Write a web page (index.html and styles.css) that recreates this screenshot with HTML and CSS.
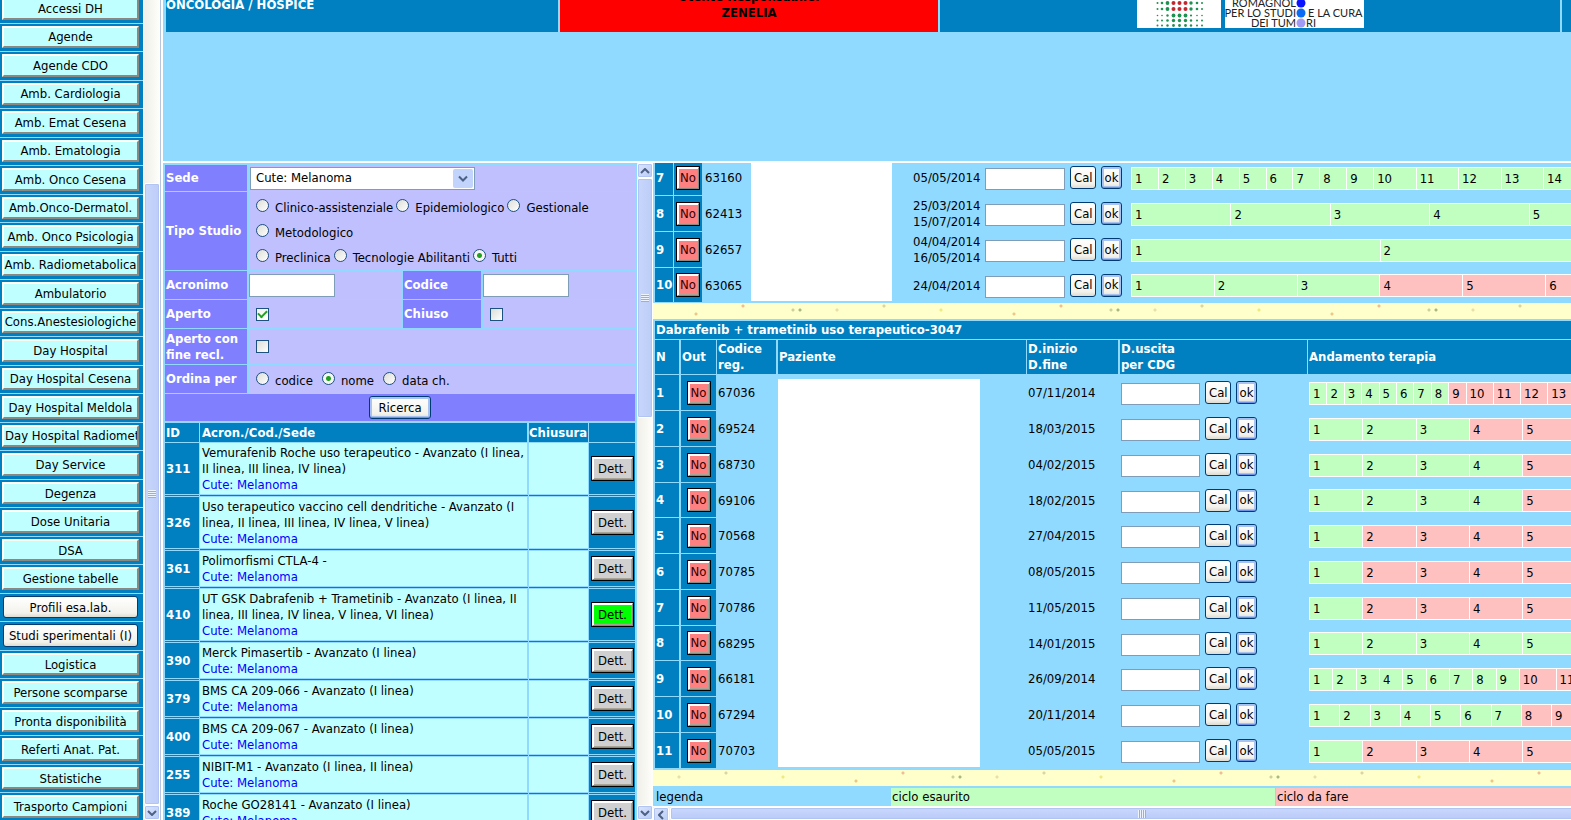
FILE: index.html
```html
<!DOCTYPE html>
<html lang="it">
<head>
<meta charset="utf-8">
<title>Oncologia / Hospice - Studi sperimentali</title>
<link rel="stylesheet" href="styles.css">
</head>
<body>
<svg class="defs" aria-hidden="true">
  <symbol id="up" viewBox="0 0 10 6"><path d="M1 5l4-4 4 4" fill="none" stroke="#4d6185" stroke-width="2"/></symbol>
  <symbol id="down" viewBox="0 0 10 6"><path d="M1 1l4 4 4-4" fill="none" stroke="#4d6185" stroke-width="2"/></symbol>
  <symbol id="left" viewBox="0 0 6 10"><path d="M5 1L1 5l4 4" fill="none" stroke="#4d6185" stroke-width="2"/></symbol>
</svg>

<nav class="sidebar">
  <div class="menu">
    <div class="item"><button>Accessi DH</button></div>
    <div class="item"><button>Agende</button></div>
    <div class="item"><button>Agende CDO</button></div>
    <div class="item"><button>Amb. Cardiologia</button></div>
    <div class="item"><button>Amb. Emat Cesena</button></div>
    <div class="item"><button>Amb. Ematologia</button></div>
    <div class="item"><button>Amb. Onco Cesena</button></div>
    <div class="item"><button>Amb.Onco-Dermatol.</button></div>
    <div class="item"><button>Amb. Onco Psicologia</button></div>
    <div class="item"><button>Amb. Radiometabolica</button></div>
    <div class="item"><button>Ambulatorio</button></div>
    <div class="item"><button>Cons.Anestesiologiche</button></div>
    <div class="item"><button>Day Hospital</button></div>
    <div class="item"><button>Day Hospital Cesena</button></div>
    <div class="item"><button>Day Hospital Meldola</button></div>
    <div class="item"><button class="long">Day Hospital Radiometab.</button></div>
    <div class="item"><button>Day Service</button></div>
    <div class="item"><button>Degenza</button></div>
    <div class="item"><button>Dose Unitaria</button></div>
    <div class="item"><button>DSA</button></div>
    <div class="item"><button>Gestione tabelle</button></div>
    <div class="item"><button class="xp">Profili esa.lab.</button></div>
    <div class="item"><button class="xp">Studi sperimentali (I)</button></div>
    <div class="item"><button>Logistica</button></div>
    <div class="item"><button>Persone scomparse</button></div>
    <div class="item"><button>Pronta disponibilità</button></div>
    <div class="item"><button>Referti Anat. Pat.</button></div>
    <div class="item"><button>Statistiche</button></div>
    <div class="item"><button>Trasporto Campioni</button></div>
  </div>
  <div class="scroll scroll-menu">
    <div class="thumb"><i class="grip"></i></div>
    <div class="arrow"><svg width="10" height="6"><use href="#down"/></svg></div>
  </div>
</nav>

<div class="main">
  <header class="top">
    <div class="banner">
      <div class="cell unit">ONCOLOGIA / HOSPICE</div>
      <div class="cell user">Utente Responsabile:<br>ZENELIA</div>
      <div class="cell logos">
        <svg class="logo-dots" width="84" height="28" viewBox="0 0 84 28">
          <rect width="84" height="28" fill="#fff"/>
          <g fill="#1f9150">
            <circle cx="20.500" cy="3" r="1"/><circle cx="25" cy="3" r="1.300"/><circle cx="30.500" cy="3" r="1.900"/><circle cx="54" cy="3" r="1.700"/><circle cx="60" cy="3" r="1.300"/><circle cx="65" cy="3" r="1"/>
            <circle cx="20.500" cy="9" r="1"/><circle cx="25" cy="9" r="1.300"/><circle cx="30.500" cy="9" r="1.900"/><circle cx="54" cy="9" r="1.700"/><circle cx="60" cy="9" r="1.300"/><circle cx="65" cy="9" r="1"/>
            <circle cx="20.500" cy="15.500" r=".8"/><circle cx="25" cy="15.500" r=".8"/><circle cx="30.500" cy="15.500" r="1.200"/><circle cx="36.500" cy="15.500" r="1.900"/><circle cx="42.500" cy="15.500" r="1.900"/><circle cx="48.500" cy="15.500" r="1.900"/><circle cx="54" cy="15.500" r="1.100"/><circle cx="60" cy="15.500" r=".8"/><circle cx="65" cy="15.500" r=".8"/>
            <circle cx="20.500" cy="20.500" r="1"/><circle cx="25" cy="20.500" r="1"/><circle cx="30.500" cy="20.500" r="1.300"/><circle cx="36.500" cy="20.500" r="1.700"/><circle cx="42.500" cy="20.500" r="1.700"/><circle cx="48.500" cy="20.500" r="1.700"/><circle cx="54" cy="20.500" r="1.200"/><circle cx="60" cy="20.500" r="1"/><circle cx="65" cy="20.500" r="1"/>
            <circle cx="20.500" cy="25.500" r="1"/><circle cx="25" cy="25.500" r="1"/><circle cx="30.500" cy="25.500" r="1.200"/><circle cx="36.500" cy="25.500" r="1.400"/><circle cx="42.500" cy="25.500" r="1.400"/><circle cx="48.500" cy="25.500" r="1.400"/><circle cx="54" cy="25.500" r="1.200"/><circle cx="60" cy="25.500" r="1"/><circle cx="65" cy="25.500" r="1"/>
          </g>
          <g fill="#c1272d">
            <circle cx="36.500" cy="3" r="2"/><circle cx="42.500" cy="3" r="2"/><circle cx="48.500" cy="3" r="2"/>
            <circle cx="36.500" cy="9" r="2"/><circle cx="42.500" cy="9" r="2"/><circle cx="48.500" cy="9" r="2"/>
          </g>
        </svg>
        <svg class="logo-text" width="139" height="28" viewBox="0 0 139 28">
          <rect width="139" height="28" fill="#fff"/>
          <text x="71" y="7" text-anchor="end">ROMAGNOL</text>
          <text x="71" y="17" text-anchor="end">PER LO STUDI</text>
          <text x="83" y="17">E LA CURA</text>
          <text x="71" y="27" text-anchor="end">DEI TUM</text>
          <text x="81" y="27">RI</text>
          <circle cx="76" cy="3" r="4.500" fill="#0a14ff"/>
          <circle cx="76" cy="13" r="4.500" fill="#0a6cf5"/>
          <circle cx="76" cy="23" r="4.500" fill="#a09cf5"/>
        </svg>
      </div>
      <div class="cell rest"></div>
    </div>
  </header>

  <div class="frames">
    <section class="studies">
      <div class="pane">
        <form class="search">
          <label class="lab" for="sede">Sede</label>
          <div class="val wide"><span class="select"><select id="sede"><option>Cute: Melanoma</option></select><svg width="10" height="6"><use href="#down"/></svg></span></div>
          <div class="lab">Tipo Studio</div>
          <div class="val wide types">
            <div class="radios"><label><input type="radio" name="tipo">Clinico-assistenziale</label><label><input type="radio" name="tipo">Epidemiologico</label><label><input type="radio" name="tipo">Gestionale</label></div>
            <div class="radios"><label><input type="radio" name="tipo">Metodologico</label></div>
            <div class="radios"><label><input type="radio" name="tipo">Preclinica</label><label><input type="radio" name="tipo">Tecnologie Abilitanti</label><label><input type="radio" name="tipo" checked>Tutti</label></div>
          </div>
          <label class="lab" for="acr">Acronimo</label>
          <div class="val"><input class="text" id="acr" type="text"></div>
          <label class="lab" for="cod">Codice</label>
          <div class="val"><input class="text" id="cod" type="text"></div>
          <label class="lab" for="ap">Aperto</label>
          <div class="val"><input type="checkbox" id="ap" checked></div>
          <label class="lab" for="ch">Chiuso</label>
          <div class="val"><input type="checkbox" id="ch"></div>
          <label class="lab" for="fr">Aperto con fine recl.</label>
          <div class="val wide"><input type="checkbox" id="fr"></div>
          <div class="lab">Ordina per</div>
          <div class="val wide"><div class="radios order"><label><input type="radio" name="ord">codice</label><label><input type="radio" name="ord" checked>nome</label><label><input type="radio" name="ord">data ch.</label></div></div>
          <div class="submit"><button class="xp focus" type="button">Ricerca</button></div>
        </form>
        <table class="results">
          <colgroup><col class="r-id"><col><col class="r-ch"><col class="r-bt"></colgroup>
          <thead><tr><th>ID</th><th class="pad">Acron./Cod./Sede</th><th>Chiusura</th><th></th></tr></thead>
          <tbody>
            <tr class="tall"><th>311</th><td class="pad">Vemurafenib Roche uso terapeutico - Avanzato (I linea, II linea, III linea, IV linea)<br><span class="site">Cute: Melanoma</span></td><td></td><td class="act"><button class="old">Dett.</button></td></tr>
            <tr class="tall"><th>326</th><td class="pad">Uso terapeutico vaccino cell dendritiche - Avanzato (I linea, II linea, III linea, IV linea, V linea)<br><span class="site">Cute: Melanoma</span></td><td></td><td class="act"><button class="old">Dett.</button></td></tr>
            <tr><th>361</th><td class="pad">Polimorfismi CTLA-4 -<br><span class="site">Cute: Melanoma</span></td><td></td><td class="act"><button class="old">Dett.</button></td></tr>
            <tr class="tall"><th>410</th><td class="pad">UT GSK Dabrafenib + Trametinib - Avanzato (I linea, II linea, III linea, IV linea, V linea, VI linea)<br><span class="site">Cute: Melanoma</span></td><td></td><td class="act"><button class="old on">Dett.</button></td></tr>
            <tr><th>390</th><td class="pad">Merck Pimasertib - Avanzato (I linea)<br><span class="site">Cute: Melanoma</span></td><td></td><td class="act"><button class="old">Dett.</button></td></tr>
            <tr><th>379</th><td class="pad">BMS CA 209-066 - Avanzato (I linea)<br><span class="site">Cute: Melanoma</span></td><td></td><td class="act"><button class="old">Dett.</button></td></tr>
            <tr><th>400</th><td class="pad">BMS CA 209-067 - Avanzato (I linea)<br><span class="site">Cute: Melanoma</span></td><td></td><td class="act"><button class="old">Dett.</button></td></tr>
            <tr><th>255</th><td class="pad">NIBIT-M1 - Avanzato (I linea, II linea)<br><span class="site">Cute: Melanoma</span></td><td></td><td class="act"><button class="old">Dett.</button></td></tr>
            <tr><th>389</th><td class="pad">Roche GO28141 - Avanzato (I linea)<br><span class="site">Cute: Melanoma</span></td><td></td><td class="act"><button class="old">Dett.</button></td></tr>
          </tbody>
        </table>
      </div>
      <div class="scroll scroll-studies">
        <div class="arrow"><svg width="10" height="6"><use href="#up"/></svg></div>
        <div class="thumb"><i class="grip"></i></div>
        <div class="space"></div>
        <div class="arrow"><svg width="10" height="6"><use href="#down"/></svg></div>
      </div>
    </section>

    <section class="patients">
      <div class="view">
        <table class="pts first">
          <colgroup><col class="a-n"><col class="a-out"><col class="a-cod"><col class="a-paz"><col class="a-date"><col class="a-exit"><col></colgroup>
          <tbody>
            <tr><th>7</th><th class="out"><button class="old no">No</button></th><td>63160</td><td class="blank" rowspan="4"></td><td>05/05/2014</td><td><div class="exit"><input class="text" type="text" aria-label="Data uscita"><button class="xp">Cal</button><button class="xp focus">ok</button></div></td><td><ol class="cycles"><li>1<li>2<li>3<li>4<li>5<li>6<li>7<li>8<li>9<li class="w">10<li class="w">11<li class="w">12<li class="w">13<li class="w">14<li class="w">15</ol></td></tr>
            <tr><th>8</th><th class="out"><button class="old no">No</button></th><td>62413</td><td>25/03/2014<br>15/07/2014</td><td><div class="exit"><input class="text" type="text" aria-label="Data uscita"><button class="xp">Cal</button><button class="xp focus">ok</button></div></td><td><ol class="cycles"><li>1<li>2<li>3<li>4<li>5</ol></td></tr>
            <tr><th>9</th><th class="out"><button class="old no">No</button></th><td>62657</td><td>04/04/2014<br>16/05/2014</td><td><div class="exit"><input class="text" type="text" aria-label="Data uscita"><button class="xp">Cal</button><button class="xp focus">ok</button></div></td><td><ol class="cycles"><li>1<li>2</ol></td></tr>
            <tr><th>10</th><th class="out"><button class="old no">No</button></th><td>63065</td><td>24/04/2014</td><td><div class="exit"><input class="text" type="text" aria-label="Data uscita"><button class="xp">Cal</button><button class="xp focus">ok</button></div></td><td><ol class="cycles"><li>1<li>2<li>3<li class="t">4<li class="t">5<li class="t">6</ol></td></tr>
          </tbody>
        </table>
        <div class="sand"></div>
        <h2>Dabrafenib + trametinib uso terapeutico-3047</h2>
        <table class="pts second">
          <colgroup><col class="b-n"><col class="b-out"><col class="b-cod"><col class="b-paz"><col class="b-date"><col class="b-exit"><col></colgroup>
          <thead><tr><th>N</th><th>Out</th><th>Codice reg.</th><th>Paziente</th><th>D.inizio<br>D.fine</th><th>D.uscita<br>per CDG</th><th>Andamento terapia</th></tr></thead>
          <tbody>
            <tr><th>1</th><th class="out"><button class="old no">No</button></th><td>67036</td><td class="blank" rowspan="11"></td><td>07/11/2014</td><td><div class="exit"><input class="text" type="text" aria-label="Data uscita"><button class="xp">Cal</button><button class="xp focus">ok</button></div></td><td><ol class="cycles"><li>1<li>2<li>3<li>4<li>5<li>6<li>7<li>8<li class="t">9<li class="t w">10<li class="t w">11<li class="t w">12<li class="t w">13<li class="t w">14<li class="t w">15</ol></td></tr>
            <tr><th>2</th><th class="out"><button class="old no">No</button></th><td>69524</td><td>18/03/2015</td><td><div class="exit"><input class="text" type="text" aria-label="Data uscita"><button class="xp">Cal</button><button class="xp focus">ok</button></div></td><td><ol class="cycles"><li>1<li>2<li>3<li class="t">4<li class="t">5<li class="t">6</ol></td></tr>
            <tr><th>3</th><th class="out"><button class="old no">No</button></th><td>68730</td><td>04/02/2015</td><td><div class="exit"><input class="text" type="text" aria-label="Data uscita"><button class="xp">Cal</button><button class="xp focus">ok</button></div></td><td><ol class="cycles"><li>1<li>2<li>3<li>4<li class="t">5<li class="t">6</ol></td></tr>
            <tr><th>4</th><th class="out"><button class="old no">No</button></th><td>69106</td><td>18/02/2015</td><td><div class="exit"><input class="text" type="text" aria-label="Data uscita"><button class="xp">Cal</button><button class="xp focus">ok</button></div></td><td><ol class="cycles"><li>1<li>2<li>3<li>4<li class="t">5<li class="t">6</ol></td></tr>
            <tr><th>5</th><th class="out"><button class="old no">No</button></th><td>70568</td><td>27/04/2015</td><td><div class="exit"><input class="text" type="text" aria-label="Data uscita"><button class="xp">Cal</button><button class="xp focus">ok</button></div></td><td><ol class="cycles"><li>1<li class="t">2<li class="t">3<li class="t">4<li class="t">5<li class="t">6</ol></td></tr>
            <tr><th>6</th><th class="out"><button class="old no">No</button></th><td>70785</td><td>08/05/2015</td><td><div class="exit"><input class="text" type="text" aria-label="Data uscita"><button class="xp">Cal</button><button class="xp focus">ok</button></div></td><td><ol class="cycles"><li>1<li class="t">2<li class="t">3<li class="t">4<li class="t">5<li class="t">6</ol></td></tr>
            <tr><th>7</th><th class="out"><button class="old no">No</button></th><td>70786</td><td>11/05/2015</td><td><div class="exit"><input class="text" type="text" aria-label="Data uscita"><button class="xp">Cal</button><button class="xp focus">ok</button></div></td><td><ol class="cycles"><li>1<li class="t">2<li class="t">3<li class="t">4<li class="t">5<li class="t">6</ol></td></tr>
            <tr><th>8</th><th class="out"><button class="old no">No</button></th><td>68295</td><td>14/01/2015</td><td><div class="exit"><input class="text" type="text" aria-label="Data uscita"><button class="xp">Cal</button><button class="xp focus">ok</button></div></td><td><ol class="cycles"><li>1<li>2<li>3<li>4<li>5<li class="t">6</ol></td></tr>
            <tr><th>9</th><th class="out"><button class="old no">No</button></th><td>66181</td><td>26/09/2014</td><td><div class="exit"><input class="text" type="text" aria-label="Data uscita"><button class="xp">Cal</button><button class="xp focus">ok</button></div></td><td><ol class="cycles"><li>1<li>2<li>3<li>4<li>5<li>6<li>7<li>8<li>9<li class="t w">10<li class="t w">11<li class="t w">12</ol></td></tr>
            <tr><th>10</th><th class="out"><button class="old no">No</button></th><td>67294</td><td>20/11/2014</td><td><div class="exit"><input class="text" type="text" aria-label="Data uscita"><button class="xp">Cal</button><button class="xp focus">ok</button></div></td><td><ol class="cycles"><li>1<li>2<li>3<li>4<li>5<li>6<li>7<li class="t">8<li class="t">9<li class="t w">10</ol></td></tr>
            <tr><th>11</th><th class="out"><button class="old no">No</button></th><td>70703</td><td>05/05/2015</td><td><div class="exit"><input class="text" type="text" aria-label="Data uscita"><button class="xp">Cal</button><button class="xp focus">ok</button></div></td><td><ol class="cycles"><li>1<li class="t">2<li class="t">3<li class="t">4<li class="t">5<li class="t">6</ol></td></tr>
          </tbody>
        </table>
        <div class="sand low"></div>
        <div class="legend"><span>legenda</span><span class="done">ciclo esaurito</span><span class="todo">ciclo da fare</span></div>
      </div>
      <div class="scroll-h"><div class="arrow"><svg width="6" height="10"><use href="#left"/></svg></div><div class="thumb"><i class="grip"></i></div></div>
    </section>
  </div>
</div>
</body>
</html>
```
FILE: styles.css
```css
:root {
  --sky: #91daff;
  --blue: #0080c0;
  --cyan: #c0ffff;
  --violet: #8080ff;
  --lilac: #c0c0ff;
  --done: #c0ffc0;
  --todo: #ffc0c0;
}

* { box-sizing: border-box; }

body {
  margin: 0;
  display: flex;
  height: 100vh;
  overflow: hidden;
  background: #fff;
  color: #000;
  font: 13px/16px "DejaVu Sans Condensed", "DejaVu Sans", sans-serif;
}

.defs { position: absolute; width: 0; height: 0; }

button, input, select {
  margin: 0;
  font: inherit;
  color: inherit;
}

/* Menu frame */
.sidebar {
  display: flex;
  flex: none;
  width: 163px;
  overflow: hidden;
}

.menu {
  display: flex;
  flex-direction: column;
  width: 143px;
  height: calc(100vh + 7px);
  margin-top: -5px;
  background: var(--blue);
}

.item {
  display: flex;
  flex: 1;
  padding: 2px 4px 3px 2px;
  border-bottom: 1px solid var(--sky);
}

.item button {
  flex: 1;
  min-width: 0;
  padding: 1px 0 0;
  overflow: hidden;
  white-space: nowrap;
  background: var(--cyan);
  border: 2px solid;
  border-color: #fffff4 #8a8880 #8a8880 #fffff4;
}

.item .long { padding-left: 1px; text-align: left; }

.item .xp {
  margin: 0 1px;
  background: linear-gradient(#fff, #f3f2ec 80%, #dedbd0);
}

.xp, .item .xp {
  border: 1px solid #003c74;
  border-radius: 3px;
}

.xp {
  padding: 0 3px;
  background: linear-gradient(#fff, #f3f2ec 80%, #dedbd0);
}

.xp.focus { box-shadow: inset 0 -1px #6d92e8, inset 0 0 0 2px #a8c2f2; }

/* Scroll bars */
.scroll {
  display: flex;
  flex-direction: column;
  flex: none;
  width: 16px;
  background: linear-gradient(90deg, #f0efe8, #fefefb);
}

.thumb {
  display: flex;
  align-items: center;
  justify-content: center;
  background: linear-gradient(90deg, #c8d6fb, #bccdf8);
  border: 1px solid #fff;
  border-radius: 2px;
  box-shadow: inset 0 0 0 1px #b2c5f2;
}

.arrow {
  display: flex;
  align-items: center;
  justify-content: center;
  flex: none;
  width: 16px;
  height: 15px;
  background: linear-gradient(135deg, #dbe5fd, #b9ccf7);
  border: 1px solid #fff;
  border-radius: 2px;
  box-shadow: inset 0 0 0 1px #b2c5f2;
}

.grip {
  width: 8px;
  height: 8px;
  background: repeating-linear-gradient(#eef4fe 0 1px, #8cb0f8 1px 2px);
}

.scroll-menu { width: 17px; margin-left: 1px; padding-top: 183px; border-right: 1px solid #b8c4dc; }
.scroll-menu .thumb { flex: 1; }

/* Header frame */
.main {
  display: flex;
  flex-direction: column;
  flex: 1;
  min-width: 0;
}

.top {
  flex: none;
  height: 161px;
  padding-left: 3px;
  background: var(--sky);
}

.banner {
  display: flex;
  gap: 2px;
  height: 32px;
}

.cell {
  display: flex;
  align-items: flex-end;
  background: var(--blue);
  font-weight: bold;
  overflow: hidden;
}

.unit { width: 392px; padding-bottom: 19px; color: #fff; }
.user { width: 378px; padding-bottom: 11px; justify-content: center; text-align: center; background: #f00; }
.logos { flex: 1; gap: 4px; justify-content: center; padding-bottom: 4px; }
.rest { width: 9px; }

.logo-text text { font: 11px Lato, sans-serif; fill: #222; }

.frames {
  display: flex;
  flex: 1;
  min-height: 0;
  margin-top: 2px;
}

/* Search and study list */
.studies {
  display: flex;
  flex: none;
  width: 490px;
  overflow: hidden;
}

.pane {
  width: 474px;
  padding: 2px 2px 0 2px;
  background: var(--sky);
}

.search {
  display: grid;
  grid-template-columns: 82px 152px 78px 1fr;
  grid-template-rows: 26px 78px 28px 28px 35px 28px 27px;
  gap: 1px 2px;
}

.lab {
  display: flex;
  align-items: center;
  padding-left: 1px;
  color: #fff;
  font-weight: bold;
  background: var(--violet);
}

.val {
  display: flex;
  align-items: center;
  background: var(--lilac);
}

.wide { grid-column: span 3; }

.select {
  display: flex;
  position: relative;
  margin-left: 1px;
}

.select select {
  width: 225px;
  height: 23px;
  padding: 0 5px;
  appearance: none;
  background: #fff;
  border: 1px solid #7f9db9;
  border-radius: 0;
}

.select svg {
  position: absolute;
  top: 2px;
  right: 2px;
  width: 20px;
  height: 19px;
  padding: 6px 5px;
  background: #c2d3fc;
  border-radius: 2px;
  pointer-events: none;
}

.types {
  flex-direction: column;
  align-items: flex-start;
  justify-content: center;
}

.radios {
  display: flex;
  gap: 3px;
  height: 25px;
  padding-top: 4px;
}

.radios label {
  display: flex;
  align-items: center;
  gap: 6px;
}

.radios label:first-child { padding-left: 7px; }
.order { gap: 9px; }

input[type=radio], input[type=checkbox] {
  flex: none;
  width: 13px;
  height: 13px;
  appearance: none;
  background: linear-gradient(135deg, #dcdcd7, #fff);
  border: 1px solid #1c5180;
}

input[type=radio] { margin-bottom: 6px; border-radius: 50%; }
input[type=radio]:checked { background: radial-gradient(#21a121 0 2px, #f6f6f4 3px); }
input[type=checkbox] { margin-left: 7px; }

input[type=checkbox]:checked {
  background: linear-gradient(135deg, #f2f2ef, #fff);
  display: grid;
  place-items: center;
}

input[type=checkbox]:checked::before {
  content: "";
  width: 7px;
  height: 4px;
  margin-bottom: 2px;
  border: solid #21a121;
  border-width: 0 0 2px 2px;
  rotate: -45deg;
}

.text {
  width: 86px;
  height: 23px;
  padding: 0 2px;
  background: #fff;
  border: 1px solid #7f9db9;
}

.submit {
  grid-column: 1 / -1;
  display: flex;
  align-items: center;
  justify-content: center;
  background: var(--violet);
}

.submit .xp { height: 23px; padding: 0 8px; }

table { border-spacing: 0; table-layout: fixed; }
th { text-align: left; color: #fff; }
th, td { padding: 0; }

.results { width: 100%; margin-top: 2px; }
.r-id { width: 35px; }
.r-ch { width: 60px; }
.r-bt { width: 46px; }

.results tr { height: 38px; background: var(--blue); }
.results thead tr { height: 20px; }
.results .tall { height: 54px; }

.results th, .results td {
  background-clip: padding-box;
  border-right: 1px solid var(--sky);
  border-bottom: 3px double var(--sky);
}

.results thead th { border-bottom: 1px solid var(--sky); }
.results tr > :nth-child(2) { border-right-width: 2px; }
.results tr > :last-child { border-right: 0; }
.results th { padding-left: 1px; background-color: var(--blue); }
.results th:nth-child(3) { padding-left: 0; }
.results td { background-color: var(--cyan); }
.results .pad { padding-left: 2px; }
.results .act { padding-left: 2px; background-color: var(--blue); }
.site { color: #00f; }

.old {
  display: block;
  width: 43px;
  height: 25px;
  padding: 0;
  background: #d0d0d0;
  border: 2px solid;
  border-color: #fff #8a8880 #8a8880 #fff;
  outline: 1px solid #000;
  outline-offset: -1px;
  box-shadow: inset 1px 1px #fff, inset -1px -1px #a8a598;
}

.old.on { background: #0f0; }

.old.no {
  width: 24px;
  height: 24px;
  margin: 0 auto;
  background: #ff8080;
  color: #300;
}

.scroll-studies .thumb { height: 240px; }
.scroll-studies .space { flex: 1; }

/* Patients */
.patients {
  display: flex;
  flex-direction: column;
  flex: 1;
  min-width: 0;
}

.view {
  flex: 1;
  min-height: 0;
  overflow: hidden;
  background: var(--sky);
}

.pts { margin-left: 2px; }
.pts tr { height: 36px; }
.pts tbody tr:nth-child(4n) { height: 35px; }
.pts th { padding-left: 1px; background: var(--blue); border: solid var(--sky); border-width: 0 1px 1px 0; }
.pts td { padding-left: 1px; }
.pts th.out { padding: 0; font-weight: normal; }

.first { width: 973px; margin-top: -3px; }
.a-n { width: 19px; }
.a-out { width: 29px; }
.a-cod { width: 48px; }
.a-paz { width: 161px; }
.a-date { width: 72px; }
.a-exit { width: 146px; }
.first tr > td:nth-child(3) { padding-left: 2px; }

.second { width: 975px; }
.b-n { width: 26px; }
.b-out { width: 36px; }
.b-cod { width: 61px; }
.b-paz { width: 249px; }
.b-date { width: 93px; }
.b-exit { width: 188px; }
.second thead tr { height: 35px; }
.second tr > :first-child { border-right-width: 2px; }
.second thead th:nth-child(3), .second thead th:nth-child(5) { border-right-width: 2px; }

.blank { background: linear-gradient(#fff, #fff) no-repeat; }
.first .blank { background-size: 141px 141px; }
.second .blank { background-position: 0 4px; background-size: 202px 388px; }

.exit {
  display: flex;
  align-items: center;
  gap: 5px;
}

.exit .text { width: 80px; height: 22px; margin-top: 2px; }
.second .exit .text { width: 79px; }
.exit .xp { width: 26px; height: 23px; margin-bottom: 1px; }
.exit .focus { width: 21px; padding: 0; }

.cycles {
  display: flex;
  gap: 1px;
  margin: 0;
  padding: 1px;
  list-style: none;
  background: #fff;
}

.first .cycles { width: 498px; }
.second .cycles { width: 321px; }

.cycles li {
  flex: 5 1 0;
  min-width: 0;
  height: 21px;
  padding-top: 3px;
  text-indent: 3px;
  background: var(--done);
}

.cycles .w { flex-grow: 8; }
.cycles .t { background: var(--todo); }

.sand {
  height: 16px;
  background:
    radial-gradient(circle at 43px 11px, #ecc888 0 1px, transparent 2px) 0 0 / 318px 16px,
    radial-gradient(circle at 90px 3px, #efbe94 0 1px, transparent 2px) 0 0 / 318px 16px,
    radial-gradient(circle at 140px 7px, #ccd29a 0 1px, transparent 2px) 0 0 / 318px 16px,
    radial-gradient(circle at 147px 7px, #a8b880 0 1px, transparent 2px) 0 0 / 318px 16px,
    radial-gradient(circle at 184px 7px, #ebdfa8 0 1px, transparent 2px) 0 0 / 318px 16px,
    radial-gradient(circle at 231px 3px, #dcd4a4 0 1px, transparent 2px) 0 0 / 318px 16px,
    radial-gradient(circle at 288px 7px, #f0e880 0 1px, transparent 2px) 0 0 / 318px 16px,
    #ffffcc;
}

.low { margin-top: 1px; background-position: 160px 0; }

h2 {
  margin: 2px 0 1px 2px;
  padding: 1px;
  color: #fff;
  font-size: 13px;
  line-height: 16px;
  background: var(--blue);
}

.legend {
  display: grid;
  grid-template-columns: 236px 382px 1fr;
  gap: 0 2px;
  padding: 2px 0 1px 2px;
}

.legend span { padding: 1px; }
.legend .done { margin-left: -2px; background: var(--done); }
.legend .todo { background: var(--todo); margin-left: -1px; }

.scroll-h {
  display: flex;
  flex: none;
  height: 14px;
  border-top: 1px solid #fff;
  background: #f3f3ee;
}

.scroll-h .thumb {
  flex: 1;
  margin-left: 1px;
  margin-right: -42px;
  background: linear-gradient(#cbd8fd, #b7caf7);
}

.scroll-h .grip { background: repeating-linear-gradient(90deg, #eef4fe 0 1px, #8cb0f8 1px 2px); }
```
